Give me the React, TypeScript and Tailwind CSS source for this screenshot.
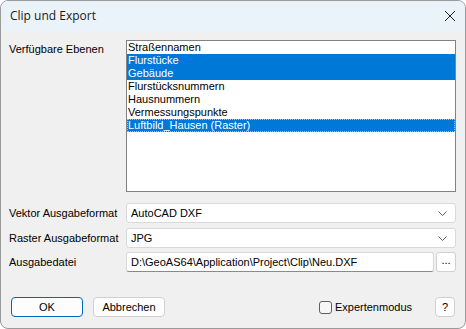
import React from "react";

const layers = [
  { name: "Straßennamen", sel: false },
  { name: "Flurstücke", sel: true },
  { name: "Gebäude", sel: true },
  { name: "Flurstücksnummern", sel: false },
  { name: "Hausnummern", sel: false },
  { name: "Vermessungspunkte", sel: false },
  { name: "Luftbild_Hausen (Raster)", sel: true, focus: true },
];

const Chevron = () => (
  <svg width="9" height="5" viewBox="0 0 9 5" className="text-[#606060]">
    <path d="M0.5 0.5 L4.5 4.5 L8.5 0.5" fill="none" stroke="currentColor" strokeWidth="1" />
  </svg>
);

const Combo = ({ value }: { value: string }) => (
  <div className="flex-1 h-[20px] bg-white border border-[#d9d9d9] rounded-[3px] flex items-center justify-between pl-[4px] pr-[8px]">
    <span>{value}</span>
    <Chevron />
  </div>
);

export default function App() {
  return (
    <div
      className="w-[466px] h-[329px] bg-[#f0f0f0] border border-[#9a9a9a] rounded-[8px] overflow-hidden flex flex-col text-[11px] text-black"
      style={{ fontFamily: '"Liberation Sans", Arial, sans-serif' }}
    >
      {/* title bar */}
      <div className="h-[30px] bg-[#ebf3fa] flex items-center justify-between pl-[9px] pr-[9px] shrink-0">
        <span className="text-[12px] text-[#1a1a1a]" style={{ fontFamily: '"Open Sans", "Noto Sans", sans-serif' }}>
          Clip und Export
        </span>
        <svg width="12" height="12" viewBox="0 0 12 12">
          <path d="M1 1 L11 11 M11 1 L1 11" stroke="#222" strokeWidth="1" />
        </svg>
      </div>

      <div className="flex-1 flex flex-col px-[8px] pt-[9px]">
        {/* layer list */}
        <div className="flex">
          <div className="w-[117px] pt-[1px]">Verfügbare Ebenen</div>
          <div className="w-[330px] h-[152px] bg-white border border-[#828282]">
            {layers.map((l) => (
              <div
                key={l.name}
                className={
                  "h-[13px] leading-[13px] pl-px " +
                  (l.sel ? "bg-[#0078d7] text-white " : "") +
                  (l.focus ? "outline outline-1 outline-dotted outline-[#f5b06a] -outline-offset-1" : "")
                }
              >
                {l.name}
              </div>
            ))}
          </div>
        </div>

        {/* format rows */}
        <div className="flex flex-col mt-[11px] gap-[5px]">
          <div className="flex items-center">
            <div className="w-[117px]">Vektor Ausgabeformat</div>
            <Combo value="AutoCAD DXF" />
            <div className="w-[1px]" />
          </div>
          <div className="flex items-center">
            <div className="w-[117px]">Raster Ausgabeformat</div>
            <Combo value="JPG" />
            <div className="w-[1px]" />
          </div>
          <div className="flex items-center -mt-px">
            <div className="w-[117px]">Ausgabedatei</div>
            <div className="flex-1 h-[20px] bg-white border border-[#dadada] border-b-[#8a8a8a] rounded-[3px] flex items-center pl-[4px]">
              D:\GeoAS64\Application\Project\Clip\Neu.DXF
            </div>
            <div className="ml-[2px] w-[20px] h-[20px] bg-white border border-[#d0d0d0] rounded-[3px] flex items-center justify-center leading-none pb-[3px]">
              ...
            </div>
            <div className="w-[1px]" />
          </div>
        </div>

        {/* buttons */}
        <div className="flex items-center mt-[25px] pl-[2px]">
          <div className="w-[72px] h-[20px] bg-[#fdfdfd] border border-[#0067c0] rounded-[4px] flex items-center justify-center">
            OK
          </div>
          <div className="ml-[10px] w-[72px] h-[20px] bg-[#fdfdfd] border border-[#d0d0d0] rounded-[4px] flex items-center justify-center">
            Abbrechen
          </div>
          <div className="flex-1" />
          <div className="flex items-center">
            <div className="w-[13px] h-[13px] border border-[#5f5f5f] rounded-[3px] bg-[#f7f7f7]" />
            <span className="ml-[3px]">Expertenmodus</span>
          </div>
          <div className="ml-[23px] w-[20px] h-[20px] bg-[#fdfdfd] border border-[#d0d0d0] rounded-[4px] flex items-center justify-center">
            ?
          </div>
          <div className="w-[2px]" />
        </div>
      </div>
    </div>
  );
}
